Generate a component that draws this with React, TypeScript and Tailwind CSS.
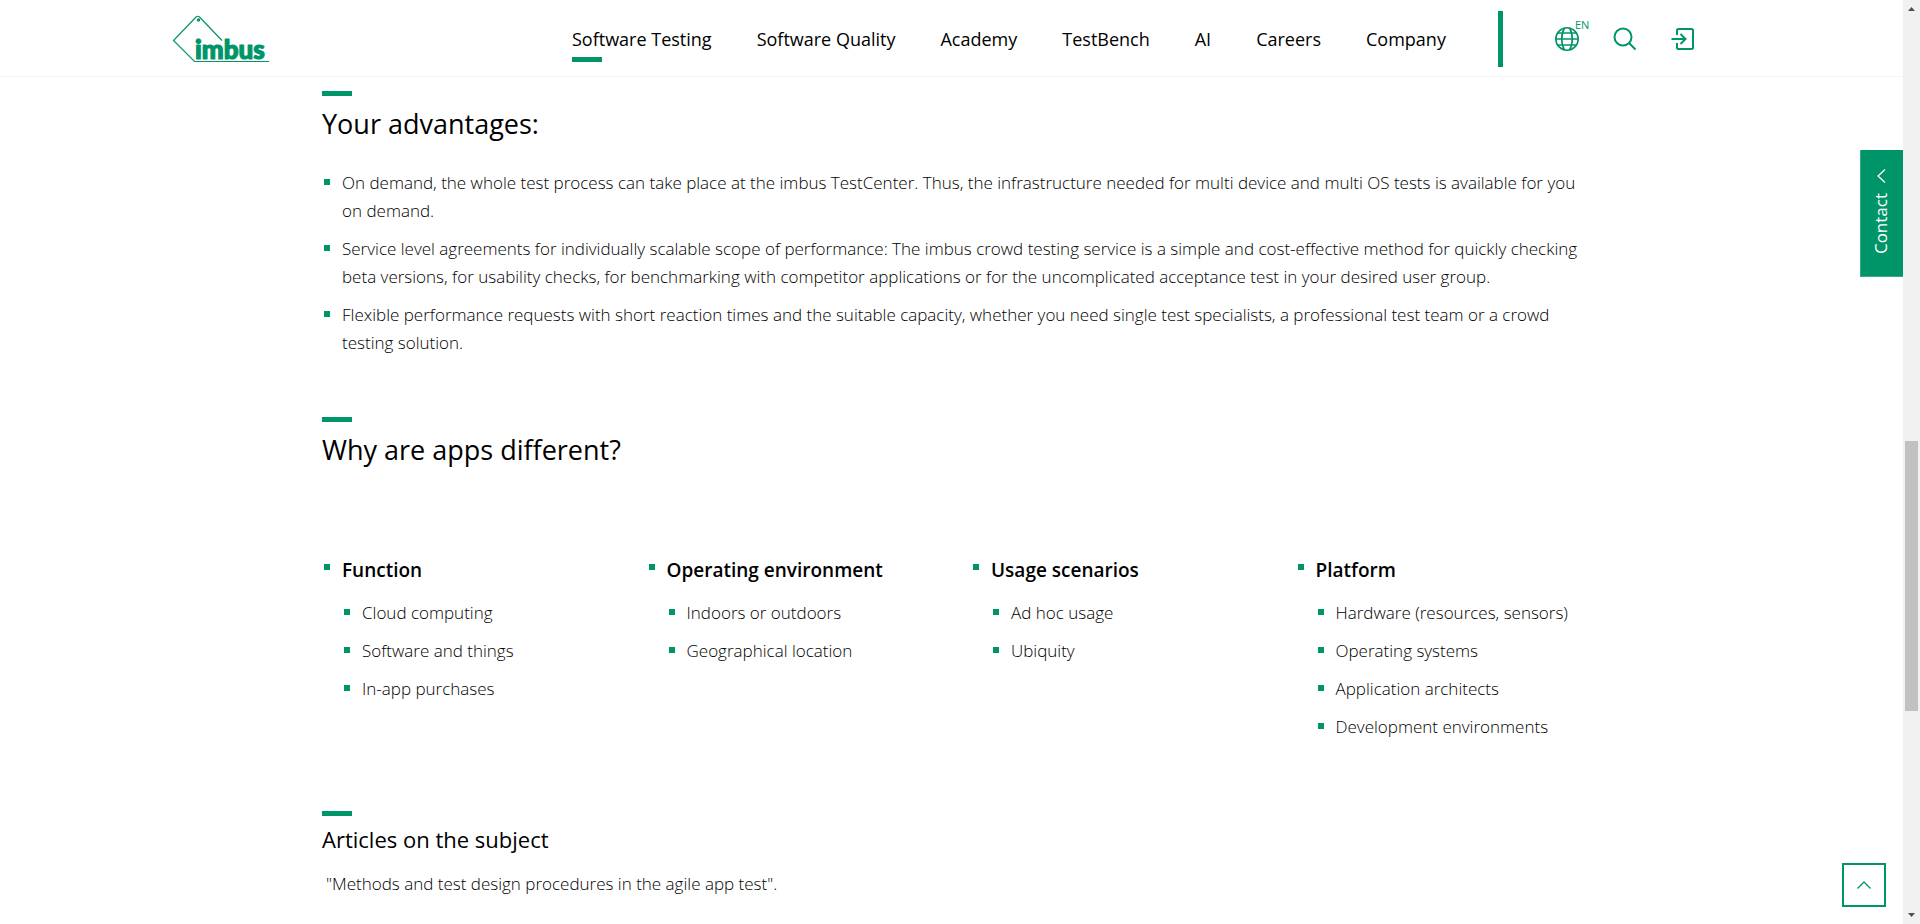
import type { ReactNode } from "react";

const NAV = ["Software Testing", "Software Quality", "Academy", "TestBench", "AI", "Careers", "Company"];

const ADVANTAGES = [
  "On demand, the whole test process can take place at the imbus TestCenter. Thus, the infrastructure needed for multi device and multi OS tests is available for you on demand.",
  "Service level agreements for individually scalable scope of performance: The imbus crowd testing service is a simple and cost-effective method for quickly checking beta versions, for usability checks, for benchmarking with competitor applications or for the uncomplicated acceptance test in your desired user group.",
  "Flexible performance requests with short reaction times and the suitable capacity, whether you need single test specialists, a professional test team or a crowd testing solution.",
];

const TOPICS = [
  { title: "Function", items: ["Cloud computing", "Software and things", "In-app purchases"] },
  { title: "Operating environment", items: ["Indoors or outdoors", "Geographical location"] },
  { title: "Usage scenarios", items: ["Ad hoc usage", "Ubiquity"] },
  {
    title: "Platform",
    items: ["Hardware (resources, sensors)", "Operating systems", "Application architects", "Development environments"],
  },
];

function Logo() {
  return (
    <svg width="98" height="50" viewBox="0 0 98 50" fill="none" role="img" aria-label="imbus">
      <path
        d="M50 26.500 L27.500 3 Q25.800 1.500 24 3 L1.500 26.500 L22.500 47.500 H97"
        stroke="#009569"
        strokeWidth="1.200"
      />
      <circle cx="26.500" cy="6" r="1.700" fill="#009569" />
      <text
        x="23"
        y="44.500"
        fill="#009569"
        stroke="#009569"
        strokeWidth="1.200"
        strokeLinejoin="round"
        className="font-[Lato] text-[26px] font-black"
      >
        imbus
      </text>
    </svg>
  );
}

function GlobeIcon() {
  return (
    <svg width="24" height="24" viewBox="0 0 24 24" fill="none" stroke="currentColor" strokeWidth="1.600">
      <circle cx="12" cy="12" r="11.200" />
      <path d="M9.500 1C5.800 7 5.800 17 9.500 23M14.500 1C18.200 7 18.200 17 14.500 23M2.500 6H21.500M1 12H23M2.500 18H21.500" />
    </svg>
  );
}

function SearchIcon() {
  return (
    <svg width="24" height="24" viewBox="0 0 24 24" fill="none" stroke="currentColor" strokeWidth="2">
      <circle cx="10" cy="10" r="8.500" />
      <path d="M16 16L22.500 22.500" />
    </svg>
  );
}

function LoginIcon() {
  return (
    <svg width="24" height="24" viewBox="0 0 24 24" fill="none" stroke="currentColor" strokeWidth="2">
      <path d="M6 8V3.500Q6 2 7.500 2H20.500Q22 2 22 3.500V20.500Q22 22 20.500 22H7.500Q6 22 6 20.500V16" />
      <path d="M0.500 12H14.500M9.500 7L14.500 12L9.500 17" />
    </svg>
  );
}

function Bullet({ children, offset }: { children: ReactNode; offset: string }) {
  return (
    <div className="flex items-start">
      <span className={`mr-3 ml-0.5 size-1.5 shrink-0 bg-[#009569] ${offset}`} />
      {children}
    </div>
  );
}

function Marker() {
  return <div className="h-[5px] w-[30px] bg-[#009569]" />;
}

function Header() {
  return (
    <header className="border-b border-[#f5f5f5] bg-white">
      <div className="mx-auto flex h-[76px] w-full max-w-[1559px] items-center pt-0.5">
        <a href="#home" className="shrink-0">
          <Logo />
        </a>
        <nav className="ml-[302px] flex gap-[45px] text-[18px] leading-6 whitespace-nowrap">
          {NAV.map((label, i) => (
            <a key={label} href={`#${label}`} className="relative">
              {label}
              {i === 0 && <span className="absolute top-[30px] left-0 h-[5px] w-[30px] bg-[#009569]" />}
            </a>
          ))}
        </nav>
        <div className="ml-auto flex items-center pr-9 text-[#009569]">
          <span className="mr-[52px] h-14 w-[5px] bg-[#009569]" />
          <button type="button" aria-label="Language" className="relative mr-[34px]">
            <GlobeIcon />
            <span className="absolute -top-2.5 left-5 text-[11px] leading-4 font-normal">EN</span>
          </button>
          <button type="button" aria-label="Search" className="mr-[34px]">
            <SearchIcon />
          </button>
          <button type="button" aria-label="Login">
            <LoginIcon />
          </button>
        </div>
      </div>
    </header>
  );
}

function Content() {
  return (
    <main className="mx-auto w-full max-w-[1259px] pt-3.5 text-[17px] leading-7 font-light">
      <section>
        <Marker />
        <h2 className="mt-2.5 text-[27px] leading-9 font-normal">Your advantages:</h2>
        <ul className="mt-[27px] flex flex-col gap-2.5">
          {ADVANTAGES.map((text) => (
            <li key={text}>
              <Bullet offset="mt-2.5">
                <p>{text}</p>
              </Bullet>
            </li>
          ))}
        </ul>
      </section>

      <section className="mt-[60px]">
        <Marker />
        <h2 className="mt-2.5 text-[27px] leading-9 font-normal">Why are apps different?</h2>
        <ul className="mt-[88px] grid grid-cols-4 gap-[39px]">
          {TOPICS.map((topic) => (
            <li key={topic.title}>
              <Bullet offset="mt-2">
                <h3 className="text-[19px] font-semibold">{topic.title}</h3>
              </Bullet>
              <ul className="mt-[15px] flex flex-col gap-2.5 pl-5 whitespace-nowrap">
                {topic.items.map((item) => (
                  <li key={item}>
                    <Bullet offset="mt-2.5">{item}</Bullet>
                  </li>
                ))}
              </ul>
            </li>
          ))}
        </ul>
      </section>

      <section className="mt-[70px]">
        <Marker />
        <h3 className="mt-2 text-[22px] leading-[30px] font-normal">Articles on the subject</h3>
        <p className="mt-4 pl-1">"Methods and test design procedures in the agile app test".</p>
      </section>
    </main>
  );
}

function ScrollTrack() {
  return (
    <div aria-hidden="true" className="flex w-[17px] shrink-0 flex-col items-center bg-[#f1f1f1]">
      <svg width="17" height="17" viewBox="0 0 17 17" fill="#505050">
        <path d="M5 11H12L8.500 7Z" />
      </svg>
      <div className="flex w-full flex-1 flex-col items-center">
        <div className="grow-[424]" />
        <div className="w-[13px] grow-[270] bg-[#c1c1c1]" />
        <div className="grow-[196]" />
      </div>
      <svg width="17" height="17" viewBox="0 0 17 17" fill="#505050">
        <path d="M5 6H12L8.500 10Z" />
      </svg>
    </div>
  );
}

export default function App() {
  return (
    <div className="flex h-screen overflow-hidden bg-white font-['Open_Sans','Noto_Sans',sans-serif] text-black">
      <div className="relative min-w-0 flex-1">
        <Header />
        <Content />
        <button
          type="button"
          className="absolute top-[150px] right-0 flex h-[127px] w-[43px] flex-col items-center border-b border-l border-[#33aa87] bg-[#009569] pt-[19px] pr-0.5 text-white"
        >
          <svg width="9" height="14" viewBox="0 0 9 14" fill="none" stroke="currentColor" strokeWidth="1.200">
            <path d="M8 0.500L1 7L8 13.500" />
          </svg>
          <span className="mt-2.5 rotate-180 text-[17px] leading-6 [writing-mode:vertical-rl]">Contact</span>
        </button>
        <button
          type="button"
          aria-label="Back to top"
          className="absolute right-[17px] bottom-[17px] flex size-11 items-center justify-center border-2 border-[#009569] bg-white text-[#009569]"
        >
          <svg width="14" height="8" viewBox="0 0 14 8" fill="none" stroke="currentColor" strokeWidth="1.300">
            <path d="M0.500 7.500L7 1L13.500 7.500" />
          </svg>
        </button>
      </div>
      <ScrollTrack />
    </div>
  );
}
